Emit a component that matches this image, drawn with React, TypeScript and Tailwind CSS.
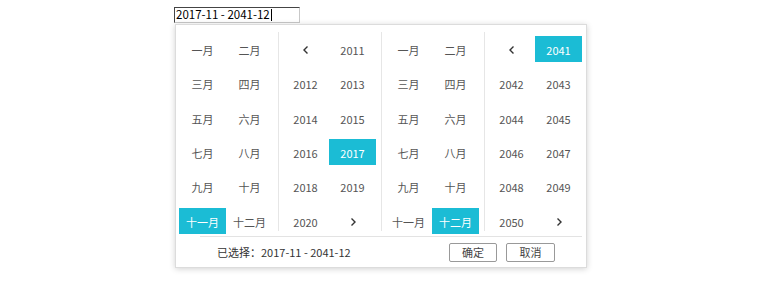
const months = ["一月", "二月", "三月", "四月", "五月", "六月", "七月", "八月", "九月", "十月", "十一月", "十二月"];

type Cell = { label: string; kind?: "prev" | "next"; active?: boolean };

function Chevron({ dir }: { dir: "left" | "right" }) {
  return (
    <svg width="8" height="10" viewBox="0 0 8 10" aria-hidden>
      <polyline
        points={dir === "left" ? "5.5,1.5 2,5 5.5,8.5" : "2.5,1.5 6,5 2.5,8.5"}
        fill="none"
        stroke="#333"
        strokeWidth="1.4"
      />
    </svg>
  );
}

function GridColumn({ cells, last }: { cells: Cell[]; last?: boolean }) {
  return (
    <div
      className={`w-[103px] h-[199px] shrink-0 pl-[3px] pt-[4px] grid grid-cols-[47px_47px] auto-rows-[26px] gap-y-[8.4px] content-start ${
        last ? "" : "border-r border-[#e6e6e6]"
      }`}
    >
      {cells.map((c, i) => (
        <div
          key={i}
          className={`flex items-center justify-center pt-[2px] text-[11px] ${
            c.active ? "bg-[#1bbcd5] text-white" : "text-[#555]"
          }`}
        >
          {c.kind ? <Chevron dir={c.kind === "prev" ? "left" : "right"} /> : c.label}
        </div>
      ))}
    </div>
  );
}

function yearCells(start: number, active: number): Cell[] {
  const cells: Cell[] = [{ label: "", kind: "prev" }];
  for (let y = start; y < start + 10; y++) cells.push({ label: String(y), active: y === active });
  cells.push({ label: "", kind: "next" });
  return cells;
}

export default function App() {
  const left = months.map((m) => ({ label: m, active: m === "十一月" }));
  const right = months.map((m) => ({ label: m, active: m === "十二月" }));

  return (
    <div
      className="w-[760px] h-[282px] bg-white overflow-hidden"
      style={{ fontFamily: '"Noto Sans CJK SC", "Noto Sans", sans-serif' }}
    >
      <div className="ml-[174px] pt-[7px]">
        <div className="w-[126px] h-[16px] border border-t-[#444] border-l-[#444] border-r-[#c8c8c8] border-b-[#c8c8c8] flex items-center pl-[1px] text-[11.5px] leading-none text-black">
          2017-11 - 2041-12
          <span className="inline-block w-px h-[12px] bg-black ml-px" />
        </div>
      </div>

      <div className="ml-[175px] mt-px w-[412px] h-[244px] bg-white border border-[#dcdcdc] shadow-[0_1px_6px_rgba(0,0,0,0.18)] flex flex-col">
        <div className="flex pt-[7px]">
          <GridColumn cells={left} />
          <GridColumn cells={yearCells(2011, 2017)} />
          <GridColumn cells={right} />
          <GridColumn cells={yearCells(2041, 2041)} last />
        </div>

        <div className="ml-[24px] mr-[4px] mt-[5px] h-[31px] border-t border-[#e3e3e3] flex items-center pl-[17px] pr-[27px]">
          <span className="text-[11px] text-[#333]">已选择：2017-11 - 2041-12</span>
          <div className="ml-auto flex gap-[9px]">
            <button className="w-[48px] h-[19px] border border-[#999] rounded-[2px] bg-white text-[11px] text-[#444] leading-none">
              确定
            </button>
            <button className="w-[49px] h-[19px] border border-[#999] rounded-[2px] bg-white text-[11px] text-[#444] leading-none">
              取消
            </button>
          </div>
        </div>
      </div>
    </div>
  );
}
